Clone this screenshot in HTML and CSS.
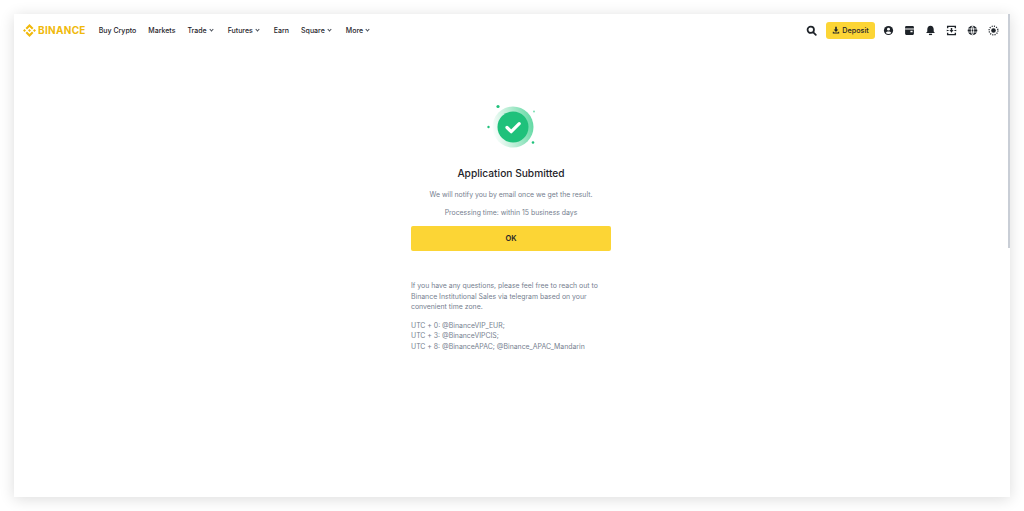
FILE: index.html
```html
<!DOCTYPE html>
<html lang="en">
<head>
    <meta charset="UTF-8">
    <meta name="viewport" content="width=device-width, initial-scale=1.0">
    <title>Application Submitted</title>
    <link rel="stylesheet" href="styles.css">
</head>
<body>
    <div class="window">
        <header class="topbar">
            <a class="logo">
                <svg class="logo-mark" viewBox="0 0 24 24" width="13" height="13">
                    <path fill="#f0b90b" d="M7.4 10.1 12 5.500l4.600 4.600 2.700-2.700L12 .1 4.700 7.400zM.1 12l2.700-2.700L5.500 12l-2.700 2.700zM7.400 13.900 12 18.500l4.600-4.600 2.700 2.700L12 23.900l-7.300-7.300zM18.500 12l2.700-2.700 2.700 2.700-2.700 2.700zM14.700 12 12 9.300 10 11.300l-.3.300-.4.400L12 14.700z"/>
                </svg>
                <span class="logo-text">BINANCE</span>
            </a>
            <nav class="nav">
                <a class="nav-item">Buy Crypto</a>
                <a class="nav-item">Markets</a>
                <a class="nav-item">Trade<span class="caret"></span></a>
                <a class="nav-item">Futures<span class="caret"></span></a>
                <a class="nav-item">Earn</a>
                <a class="nav-item">Square<span class="caret"></span></a>
                <a class="nav-item">More<span class="caret"></span></a>
            </nav>
            <div class="actions">
                <svg class="search" viewBox="0 0 12 12" width="11" height="11">
                    <circle cx="5.200" cy="5.200" r="3.500" fill="none" stroke="#1e2329" stroke-width="1.900"/>
                    <path d="M8 8l2.700 2.700" stroke="#1e2329" stroke-width="1.900" stroke-linecap="round"/>
                </svg>
                <a class="deposit">
                    <svg viewBox="0 0 10 10" width="8" height="8">
                        <path fill="#1e2329" d="M4 1h2v3.500h2L5 7.400 2 4.500h2zM1 7.200h1.200v1h5.600v-1H9V9.400H1z"/>
                    </svg>
                    Deposit
                </a>
                <div class="icons">
                    <svg viewBox="0 0 12 12" width="11" height="11">
                        <circle cx="6" cy="6" r="5" fill="#1e2329"/>
                        <circle cx="6" cy="4.500" r="1.600" fill="#fff"/>
                        <path fill="#fff" d="M3 8.800c.6-1.200 1.700-1.700 3-1.700s2.400.5 3 1.700c-.8.600-1.800 1-3 1s-2.200-.4-3-1z"/>
                    </svg>
                    <svg viewBox="0 0 12 12" width="11" height="11">
                        <rect x="1.200" y="1.200" width="9.600" height="9.600" rx="1.200" fill="#1e2329"/>
                        <path fill="#fff" d="M1.200 3.800h9.600v1.100H1.200zM7 6.300h2.400v1.500H7z"/>
                    </svg>
                    <svg viewBox="0 0 12 12" width="11" height="11">
                        <path fill="#1e2329" d="M6 .8C3.800.8 2.500 2.600 2.500 4.800V7L1.200 8.700h9.600L9.500 7V4.800C9.500 2.600 8.200.8 6 .8z"/>
                        <path fill="#1e2329" d="M4.300 9.500h3.400V11H4.300z"/>
                    </svg>
                    <svg viewBox="0 0 12 12" width="11" height="11">
                        <path fill="none" stroke="#1e2329" stroke-width="1.500" d="M1.800 3.600V1.500h8.400v2.100M1.800 8.400v2.100h8.400V8.400"/>
                        <path fill="#1e2329" d="M.8 5.200l3.200.8-3.200.8zM11.200 5.200L8 6l3.200.8zM5.200 3.200h1.600v2.200h1.300L6 8.500 3.900 5.400h1.300z"/>
                    </svg>
                    <svg viewBox="0 0 12 12" width="11" height="11">
                        <circle cx="6" cy="6" r="5.200" fill="#1e2329"/>
                        <path fill="none" stroke="#fff" stroke-width=".9" d="M.8 4.300h10.400M.8 7.700h10.400M6 .8c-1.600 3-1.600 7.400 0 10.400M6 .8c1.600 3 1.600 7.400 0 10.400"/>
                    </svg>
                    <svg viewBox="0 0 12 12" width="11" height="11">
                        <circle cx="6" cy="6" r="2.500" fill="#1e2329"/>
                        <circle cx="6" cy="6" r="4.800" fill="none" stroke="#1e2329" stroke-width="1.400" stroke-dasharray="1.200 1.300"/>
                    </svg>
                </div>
            </div>
        </header>

        <main class="content">
            <svg class="success" viewBox="0 0 48 48" width="48" height="48">
                <defs>
                    <linearGradient id="halo" x1="0" y1="0.600" x2="1" y2="0.400">
                        <stop offset="0" stop-color="#fdfefe"/>
                        <stop offset="0.500" stop-color="#b5ecd2"/>
                        <stop offset="1" stop-color="#62d9a4"/>
                    </linearGradient>
                </defs>
                <circle cx="26" cy="24" r="20.500" fill="url(#halo)"/>
                <circle cx="26" cy="24" r="15.500" fill="#1fc17b"/>
                <path d="M20 24.500l4.200 4.200 8-8" fill="none" stroke="#fff" stroke-width="3.200" stroke-linecap="round" stroke-linejoin="round"/>
                <circle cx="11" cy="3.500" r="1.600" fill="#1fc17b"/>
                <circle cx="1.500" cy="24" r="1.200" fill="#1fc17b"/>
                <circle cx="47" cy="8.500" r=".9" fill="#6fdcab"/>
                <circle cx="46" cy="39.500" r="1.300" fill="#1fc17b"/>
            </svg>
            <h1 class="title">Application Submitted</h1>
            <p class="note">We will notify you by email once we get the result.</p>
            <p class="note note-time">Processing time: within 15 business days</p>
            <button class="ok">OK</button>
            <div class="help">
                <p>If you have any questions, please feel free to reach out to Binance Institutional Sales via telegram based on your convenient time zone.</p>
                <p>UTC + 0: @BinanceVIP_EUR;<br>UTC + 3: @BinanceVIPCIS;<br>UTC + 8: @BinanceAPAC; @Binance_APAC_Mandarin</p>
            </div>
        </main>

        <div class="scrollbar"></div>
    </div>
</body>
</html>
```

FILE: styles.css
```css
html, body {
    height: 100%;
}
body {
    margin: 0;
    padding: 14px;
    box-sizing: border-box;
    background-color: #fff;
    font-family: Inter, "Open Sans", sans-serif;
    color: #1e2329;
    overflow: hidden;
}
.window {
    position: relative;
    width: 996px;
    height: 483px;
    background-color: #fff;
    box-shadow: 0px 2px 14px rgba(0, 0, 0, 0.14);
}
.topbar {
    display: flex;
    align-items: center;
    height: 32px;
    padding: 0 11px 0 9px;
}
.logo {
    display: flex;
    align-items: center;
    gap: 2px;
}
.logo-text {
    font-size: 10px;
    font-weight: 700;
    letter-spacing: 0.3px;
    color: #f0b90b;
}
.nav {
    display: flex;
    gap: 12px;
    margin-left: 13px;
}
.nav-item {
    display: flex;
    align-items: center;
    font-size: 7px;
    font-weight: 500;
    color: #1e2329;
}
.caret {
    width: 2px;
    height: 2px;
    margin: -1px 3px 0 3px;
    border-right: 1px solid #474d57;
    border-bottom: 1px solid #474d57;
    transform: rotate(45deg);
}
.actions {
    display: flex;
    align-items: center;
    margin-left: auto;
}
.search {
    margin-right: 9px;
}
.deposit {
    display: flex;
    align-items: center;
    justify-content: center;
    gap: 2px;
    width: 49px;
    height: 17px;
    border-radius: 3px;
    background-color: #fcd535;
    font-size: 7.200px;
    font-weight: 500;
}
.icons {
    display: flex;
    gap: 10px;
    margin-left: 8px;
}
.content {
    display: flex;
    flex-direction: column;
    width: 200px;
    margin: 0 auto;
    padding-top: 57px;
    transform: translateX(-1px);
}
.success {
    align-self: center;
    margin-bottom: 14px;
}
.title {
    margin: 0;
    font-size: 10.200px;
    font-weight: 500;
    line-height: 16px;
    text-align: center;
}
.note {
    margin: 8px 0 0;
    font-size: 6.900px;
    line-height: 12px;
    text-align: center;
    color: #76808f;
}
.note-time {
    margin-top: 6px;
}
.ok {
    height: 25px;
    margin-top: 7px;
    padding: 0;
    border: 0;
    border-radius: 2px;
    background-color: #fcd535;
    font-family: inherit;
    font-size: 7.500px;
    font-weight: 600;
    color: #1e2329;
}
.help {
    margin-top: 30px;
    font-size: 6.900px;
    line-height: 10.500px;
    color: #76808f;
}
.help p {
    margin: 0 0 8px;
}
.scrollbar {
    position: absolute;
    top: 0;
    right: 0;
    width: 2px;
    height: 234px;
    background-color: #c9ced6;
}
```
